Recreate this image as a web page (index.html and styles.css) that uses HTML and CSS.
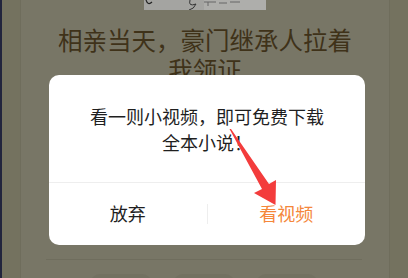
FILE: index.html
```html
<!DOCTYPE html>
<html lang="zh">
<head>
<meta charset="utf-8">
<link rel="stylesheet" href="styles.css">
</head>
<body>
<div class="page">
  <div class="panel">
    <div class="cover">
      <svg width="122" height="10" viewBox="0 0 122 10">
        <rect width="122" height="10" fill="#a4a4a1"/>
        <rect x="60" width="62" height="10" fill="#aeaeab"/>
        <path d="M2 0 Q4 6 8 2" stroke="#222" stroke-width="1.2" fill="none"/>
        <path d="M46 0 Q44 7 52 4 Q50 9 45 10" stroke="#333" stroke-width="1" fill="none"/>
        <path d="M60 2 h12 M64 2 v4 M75 3 h8 M86 2 h10" stroke="#666" stroke-width="1" fill="none"/>
      </svg>
    </div>
    <h1 class="title">相亲当天，豪门继承人拉着<br>我领证</h1>
    <div class="hidden-body"></div>
    <div class="rule"></div>
    <div class="chips">
      <span class="chip"></span>
      <span class="chip"></span>
      <span class="chip"></span>
    </div>
  </div>
</div>

<div class="dialog">
  <p class="message">看一则小视频，即可免费下载<br>全本小说！</p>
  <div class="actions">
    <button class="btn btn-cancel">放弃</button>
    <span class="sep"></span>
    <button class="btn btn-ok">看视频</button>
  </div>
</div>

<svg class="arrow" width="408" height="278" viewBox="0 0 408 278">
  <polygon points="229.5,129 231,129 269,184 276,180 275.5,205 254,193 262,189" fill="#f33c3c"/>
</svg>
</body>
</html>
```

FILE: styles.css
```css
html, body {
  margin: 0;
  padding: 0;
}
body {
  width: 408px;
  height: 278px;
  overflow: hidden;
  background: #74725f;
  border-left: 2px solid #22253d;
  box-sizing: border-box;
  font-family: "Noto Sans CJK SC", "Noto Sans", sans-serif;
  position: relative;
}
.page {
  display: flex;
  justify-content: center;
  height: 100%;
  padding-left: 18px;
  padding-right: 18px;
  overflow: hidden;
}
.panel {
  flex: 1;
  background: #787666;
  border-left: 1px solid #6f6d5c;
  border-right: 1px solid #6f6d5c;
  display: flex;
  flex-direction: column;
  align-items: center;
  overflow: hidden;
}
.cover {
  height: 10px;
  flex-shrink: 0;
  display: flex;
}
.cover svg {
  display: block;
}
.title {
  margin: 15px 0 0;
  font-size: 24.5px;
  line-height: 30px;
  font-weight: 400;
  color: #3f3219;
  text-align: center;
  flex-shrink: 0;
}
.hidden-body {
  height: 174px;
  flex-shrink: 0;
}
.rule {
  width: 316px;
  height: 1px;
  flex-shrink: 0;
  background: #6f6d5d;
  margin-left: -2px;
}
.chips {
  display: flex;
  gap: 21px;
  margin-top: 14px;
  margin-left: -2px;
  flex-shrink: 0;
}
.chip {
  width: 62px;
  height: 30px;
  border-radius: 10px;
  background: #737161;
}
.dialog {
  position: absolute;
  left: 47px;
  top: 75px;
  width: 316px;
  height: 170px;
  background: #fff;
  border-radius: 10px;
  display: flex;
  flex-direction: column;
}
.message {
  margin: 0;
  padding: 28px 0 27px;
  font-size: 18px;
  line-height: 26px;
  color: #1f1f1f;
  text-align: center;
  border-bottom: 1px solid #eeeeee;
}
.actions {
  flex: 1;
  display: flex;
  align-items: center;
}
.btn {
  flex: 1;
  height: 100%;
  border: 0;
  background: none;
  font-family: inherit;
  font-size: 18px;
  padding: 0 0 2px;
}
.btn-cancel {
  color: #1f1f1f;
}
.btn-ok {
  color: #f5873b;
}
.sep {
  width: 1px;
  height: 20px;
  background: #eeeeee;
}
.arrow {
  position: absolute;
  left: -2px;
  top: 0;
  pointer-events: none;
}
```
